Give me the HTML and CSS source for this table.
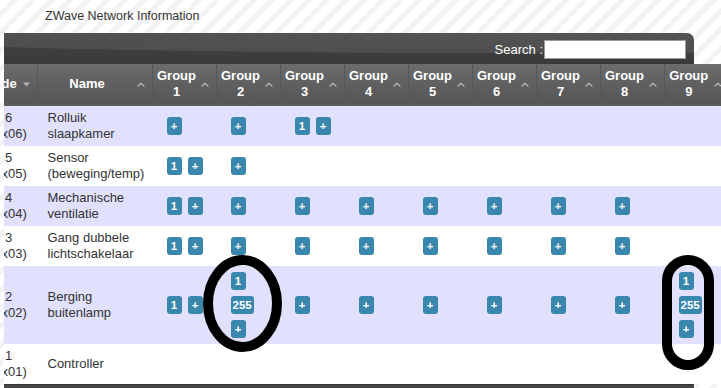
FILE: index.html
```html
<!DOCTYPE html>
<html>
<head>
<meta charset="utf-8">
<title>ZWave Network Information</title>
<link rel="stylesheet" href="styles.css">
</head>
<body>
<div class="title">ZWave Network Information</div>
<div class="viewport">
  <div class="toolbar">
    <label class="search">Search :<input type="text" class="search-input"></label>
  </div>
  <table class="grid">
    <colgroup>
      <col class="c-node"><col class="c-name">
      <col class="c-grp"><col class="c-grp"><col class="c-grp"><col class="c-grp"><col class="c-grp"><col class="c-grp"><col class="c-grp"><col class="c-grp"><col class="c-grp">
    </colgroup>
    <thead>
      <tr>
        <th class="sort-desc">Node</th>
        <th>Name</th>
        <th>Group<br>1</th><th>Group<br>2</th><th>Group<br>3</th><th>Group<br>4</th><th>Group<br>5</th><th>Group<br>6</th><th>Group<br>7</th><th>Group<br>8</th><th>Group<br>9</th>
      </tr>
    </thead>
    <tbody>
      <tr class="odd">
        <td class="node">6 (0x06)</td><td class="name">Rolluik slaapkamer</td>
        <td class="grp"><div class="badges"><span class="badge">+</span></div></td>
        <td class="grp"><div class="badges"><span class="badge">+</span></div></td>
        <td class="grp"><div class="badges"><span class="badge">1</span><span class="badge">+</span></div></td>
        <td class="grp"></td><td class="grp"></td><td class="grp"></td><td class="grp"></td><td class="grp"></td><td class="grp"></td>
      </tr>
      <tr class="even">
        <td class="node">5 (0x05)</td><td class="name">Sensor (beweging/temp)</td>
        <td class="grp"><div class="badges"><span class="badge">1</span><span class="badge">+</span></div></td>
        <td class="grp"><div class="badges"><span class="badge">+</span></div></td>
        <td class="grp"></td><td class="grp"></td><td class="grp"></td><td class="grp"></td><td class="grp"></td><td class="grp"></td><td class="grp"></td>
      </tr>
      <tr class="odd">
        <td class="node">4 (0x04)</td><td class="name">Mechanische ventilatie</td>
        <td class="grp"><div class="badges"><span class="badge">1</span><span class="badge">+</span></div></td>
        <td class="grp"><div class="badges"><span class="badge">+</span></div></td>
        <td class="grp"><div class="badges"><span class="badge">+</span></div></td>
        <td class="grp"><div class="badges"><span class="badge">+</span></div></td>
        <td class="grp"><div class="badges"><span class="badge">+</span></div></td>
        <td class="grp"><div class="badges"><span class="badge">+</span></div></td>
        <td class="grp"><div class="badges"><span class="badge">+</span></div></td>
        <td class="grp"><div class="badges"><span class="badge">+</span></div></td>
        <td class="grp"></td>
      </tr>
      <tr class="even">
        <td class="node">3 (0x03)</td><td class="name">Gang dubbele lichtschakelaar</td>
        <td class="grp"><div class="badges"><span class="badge">1</span><span class="badge">+</span></div></td>
        <td class="grp"><div class="badges"><span class="badge">+</span></div></td>
        <td class="grp"><div class="badges"><span class="badge">+</span></div></td>
        <td class="grp"><div class="badges"><span class="badge">+</span></div></td>
        <td class="grp"><div class="badges"><span class="badge">+</span></div></td>
        <td class="grp"><div class="badges"><span class="badge">+</span></div></td>
        <td class="grp"><div class="badges"><span class="badge">+</span></div></td>
        <td class="grp"><div class="badges"><span class="badge">+</span></div></td>
        <td class="grp"></td>
      </tr>
      <tr class="odd">
        <td class="node">2 (0x02)</td><td class="name">Berging buitenlamp</td>
        <td class="grp"><div class="badges"><span class="badge">1</span><span class="badge">+</span></div></td>
        <td class="grp"><div class="badges stack"><span class="badge">1</span><span class="badge">255</span><span class="badge">+</span></div></td>
        <td class="grp"><div class="badges"><span class="badge">+</span></div></td>
        <td class="grp"><div class="badges"><span class="badge">+</span></div></td>
        <td class="grp"><div class="badges"><span class="badge">+</span></div></td>
        <td class="grp"><div class="badges"><span class="badge">+</span></div></td>
        <td class="grp"><div class="badges"><span class="badge">+</span></div></td>
        <td class="grp"><div class="badges"><span class="badge">+</span></div></td>
        <td class="grp"><div class="badges stack"><span class="badge">1</span><span class="badge">255</span><span class="badge">+</span></div></td>
      </tr>
      <tr class="even">
        <td class="node">1 (0x01)</td><td class="name">Controller</td>
        <td class="grp"></td><td class="grp"></td><td class="grp"></td><td class="grp"></td><td class="grp"></td><td class="grp"></td><td class="grp"></td><td class="grp"></td><td class="grp"></td>
      </tr>
    </tbody>
  </table>
  <div class="footer"></div>
</div>
<svg class="marks" width="721" height="388" viewBox="0 0 721 388" aria-hidden="true">
  <ellipse cx="242.5" cy="303.5" rx="34.5" ry="43.5" fill="none" stroke="#000" stroke-width="10"/>
  <rect x="667" y="260" width="42" height="105" rx="21" ry="21" fill="none" stroke="#000" stroke-width="10"/>
</svg>
</body>
</html>
```

FILE: styles.css
```css
html, body {
  margin: 0;
  padding: 0;
}
body {
  width: 721px;
  height: 388px;
  overflow: hidden;
  position: relative;
  font-family: "Liberation Sans", Arial, sans-serif;
  color: #333;
  background: repeating-linear-gradient(135deg, #ffffff 0px, #ffffff 8px, #f3f3f3 8px, #f3f3f3 13px);
}

.title {
  height: 33px;
  box-sizing: border-box;
  padding: 9px 0 0 45px;
  font-size: 12.5px;
  line-height: 15px;
  color: #333;
}

.viewport {
  margin-left: 4px;
  overflow: hidden;
}

.toolbar {
  width: 690px;
  height: 31px;
  box-sizing: border-box;
  display: flex;
  justify-content: flex-end;
  align-items: flex-start;
  padding: 7px 8px 0 0;
  border-top-right-radius: 7px;
  background:
    radial-gradient(ellipse 140% 95% at 75% -10%, #555555 0%, #4e4e4e 78%, rgba(60,60,60,0) 80%),
    linear-gradient(#454545, #393939);
}

.search {
  display: flex;
  align-items: center;
  color: #fff;
  font-size: 13px;
  line-height: 19px;
}

.search-input {
  width: 142px;
  height: 19px;
  box-sizing: border-box;
  margin: 0 0 0 1px;
  padding: 0 2px;
  border: 1px solid #9a9a9a;
  background: #fff;
  font: 13px "Liberation Sans", Arial, sans-serif;
}

.grid {
  margin-left: -25px;
  width: 749px;
  table-layout: fixed;
  border-collapse: collapse;
  border-spacing: 0;
  font-size: 13px;
  line-height: 16px;
}

.c-node { width: 58px; }
.c-name { width: 115px; }
.c-grp { width: 64px; }

.grid th {
  height: 41px;
  box-sizing: border-box;
  padding: 4px 20px 5px 4px;
  color: #fff;
  font-weight: bold;
  text-align: center;
  vertical-align: middle;
  border-left: 1px solid #575757;
  border-bottom: 1px solid #5c5c5c;
  background-color: #616161;
  background-image:
    url("data:image/svg+xml,%3Csvg xmlns='http://www.w3.org/2000/svg' width='8' height='5'%3E%3Cpath d='M0.6 4.4 L4 1.2 L7.4 4.4' fill='none' stroke='%23c4c4c4' stroke-width='1.2'/%3E%3C/svg%3E"),
    linear-gradient(#6c6c6c, #5d5d5d 60%, #565656);
  background-repeat: no-repeat, no-repeat;
  background-position: right 7px center, 0 0;
  background-size: 8px 5px, 100% 100%;
}

.grid th.sort-desc {
  background-image:
    url("data:image/svg+xml,%3Csvg xmlns='http://www.w3.org/2000/svg' width='7' height='5'%3E%3Cpath d='M0 0.5 L7 0.5 L3.5 4.5 Z' fill='%23b4b4b4'/%3E%3C/svg%3E"),
    linear-gradient(#6c6c6c, #5d5d5d 60%, #565656);
  background-size: 7px 5px, 100% 100%;
}

.grid td {
  padding: 4px 10px;
  vertical-align: middle;
  color: #333;
}

.grid tr.odd td { background: #e1e1fd; }
.grid tr.even td { background: #ffffff; }

.grid td.node {
  text-align: center;
}

.grid td.name {
  text-align: left;
}

.grid td.grp {
  padding: 6px 2px 6px 14px;
}

.badges {
  display: flex;
  gap: 6px;
  align-items: center;
}

.badges.stack {
  flex-direction: column;
  align-items: flex-start;
}

.badge {
  display: inline-block;
  min-width: 15px;
  height: 18px;
  box-sizing: border-box;
  padding: 0 2px;
  border-radius: 3px;
  background: #3a87ad;
  color: #fff;
  font-size: 11.5px;
  font-weight: bold;
  line-height: 18px;
  text-align: center;
}

.footer {
  width: 690px;
  height: 12px;
  background: #464646;
  border-top: 1px solid #333;
}

.marks {
  position: absolute;
  left: 0;
  top: 0;
  pointer-events: none;
}
```
